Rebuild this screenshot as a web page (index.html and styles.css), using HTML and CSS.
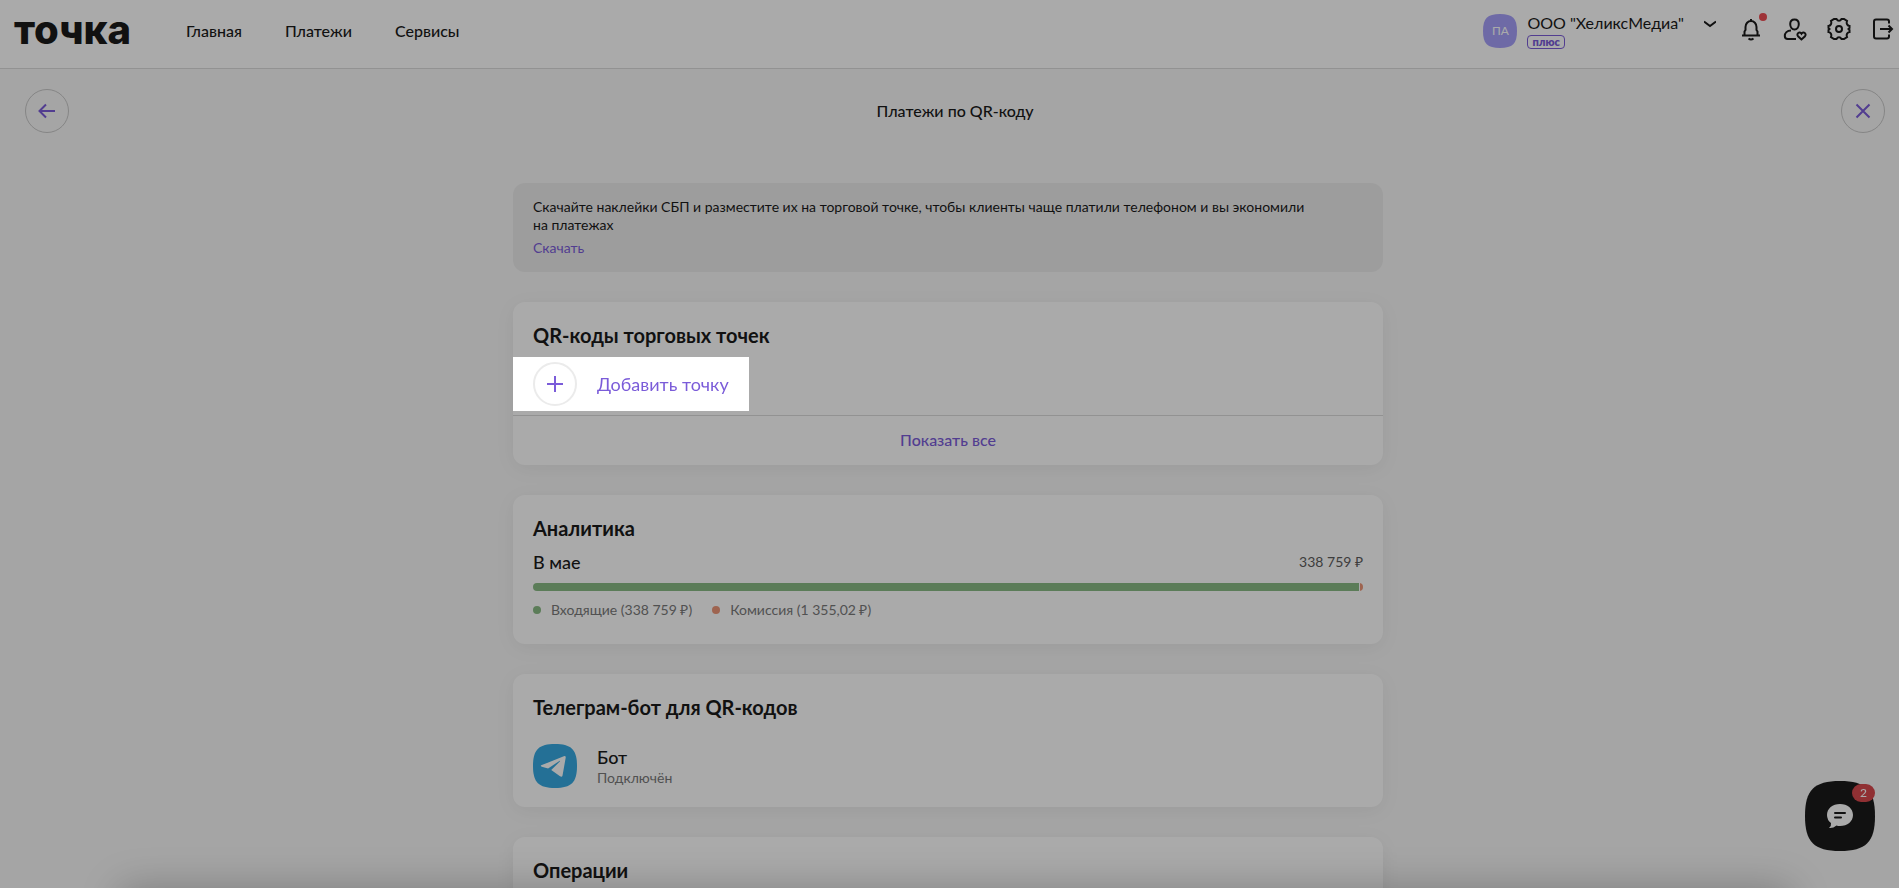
FILE: index.html
```
<!DOCTYPE html>
<html lang="ru">

<head>
  <meta charset="UTF-8">
  <meta name="viewport" content="width=device-width, initial-scale=1.0">
  <title>Платежи по QR-коду</title>
  <link rel="stylesheet" href="styles.css">
</head>

<body>

  <header class="header">
    <a href="#" class="logo">точка</a>
    <nav class="nav">
      <a href="#">Главная</a>
      <a href="#">Платежи</a>
      <a href="#">Сервисы</a>
    </nav>

    <button class="account">
      <span class="avatar">
        <svg class="squircle" viewBox="0 0 70 70"><path d="M35 0C61 0 70 9 70 35S61 70 35 70 0 61 0 35 9 0 35 0Z"/></svg>
        <span class="avatar-text">ПА</span>
      </span>
      <span class="company">
        <span class="company-name">ООО "ХеликсМедиа"</span>
        <span class="plan">плюс</span>
      </span>
      <svg class="chevron" width="12" height="12" viewBox="0 0 12 12"><path d="M0 3.500l6 4.500 6-4.500"/></svg>
    </button>

    <div class="tools">
      <button class="tool" aria-label="Уведомления">
        <svg width="24" height="24" viewBox="0 0 24 24"><path d="M3 18.500h18M5.500 18v-3.500l1-1.500v-3a5.500 6 0 0 1 11 0v3l1 1.500V18M12 4.500V2M9.500 21.500q2.500 2 5 0"/></svg>
        <span class="dot"></span>
      </button>
      <button class="tool" aria-label="Профиль">
        <svg width="24" height="24" viewBox="0 0 24 24"><path d="M11.500 2.500c2.600 0 4.300 1.900 4.300 4.600s-1.700 5.400-4.300 5.400-4.300-2.700-4.300-5.400 1.700-4.600 4.300-4.600zM8 13.500c-4 0-6.200 2.500-6.200 5.500 0 2 1 3 3 3h8.200M18.500 22.500l-3.500-3.300c-2-2.400 1.500-5.200 3.500-2.500 2-2.700 5.500.1 3.500 2.500z"/></svg>
      </button>
      <button class="tool" aria-label="Настройки">
        <svg width="24" height="24" viewBox="0 0 24 24"><circle cx="12" cy="12" r="3"/><path d="M7 2h2.500q1 1.800 2.500 1.800T14.500 2H17l3 2q-.8 2 .1 3.400T22.500 9v2l-1 1 1 1v2q-1.500.2-2.400 1.600T20 20l-3 2h-2.500q-1-1.800-2.500-1.800T9.500 22H7l-3-2q.8-2-.1-3.400T1.500 15v-2l1-1-1-1V9q1.500-.2 2.400-1.600T4 4z"/></svg>
      </button>
      <button class="tool" aria-label="Выйти">
        <svg width="24" height="24" viewBox="0 0 24 24"><path d="M18 6.500V4.500q0-2-2-2H5q-2 0-2 2v15q0 2 2 2h11q2 0 2-2v-2M9 12h11.500M17.500 8.500L21 12l-3.500 3.500"/></svg>
      </button>
    </div>
  </header>

  <div class="title-bar">
    <button class="round-button" aria-label="Назад">
      <svg width="18" height="16" viewBox="0 0 18 16"><path d="M17 8H2M8 1.500L1.500 8 8 14.500"/></svg>
    </button>
    <h1>Платежи по QR-коду</h1>
    <button class="round-button" aria-label="Закрыть">
      <svg width="16" height="16" viewBox="0 0 16 16"><path d="M1.500 1.500l13 13M14.500 1.500l-13 13"/></svg>
    </button>
  </div>

  <main class="content">
    <section class="banner">
      <p>Скачайте наклейки СБП и разместите их на торговой точке, чтобы клиенты чаще платили телефоном и вы экономили<br>на платежах</p>
      <a href="#">Скачать</a>
    </section>

    <section class="card">
      <h2>QR-коды торговых точек</h2>
      <button class="add-button">
        <span class="add-icon">
          <svg width="16" height="16" viewBox="0 0 16 16"><path d="M8 0v16M0 8h16"/></svg>
        </span>
        Добавить точку
      </button>
      <a href="#" class="show-all">Показать все</a>
    </section>

    <section class="card analytics">
      <h2>Аналитика</h2>
      <div class="month">
        <h3>В мае</h3>
        <span class="total">338 759 ₽</span>
      </div>
      <div class="bar">
        <div class="bar-income"></div>
        <div class="bar-fee"></div>
      </div>
      <ul class="legend">
        <li class="income">Входящие (338 759 ₽)</li>
        <li class="fee">Комиссия (1 355,02 ₽)</li>
      </ul>
    </section>

    <section class="card telegram">
      <h2>Телеграм-бот для QR-кодов</h2>
      <div class="bot">
        <svg class="bot-icon" width="44" height="44" viewBox="0 0 70 70">
          <path fill="#36a9e1" d="M35 0C61 0 70 9 70 35S61 70 35 70 0 61 0 35 9 0 35 0Z"/>
          <path fill="#fff" d="M13 34L49 19.500q3.500-1 3 2.500L47 50q-.8 3.500-4 1.500L29 41.500 43 27.500q.5-1-1-.5L24 39l-10-3q-2.500-1-1-2z"/>
        </svg>
        <div>
          <h3>Бот</h3>
          <p>Подключён</p>
        </div>
      </div>
    </section>

    <section class="card operations">
      <h2>Операции</h2>
    </section>
  </main>

  <div class="bottom-sheet"></div>

  <button class="chat" aria-label="Чат">
    <svg class="squircle" viewBox="0 0 70 70"><path d="M35 0C61 0 70 9 70 35S61 70 35 70 0 61 0 35 9 0 35 0Z"/></svg>
    <svg class="bubble" width="26" height="26" viewBox="0 0 26 26">
      <path fill="#fff" d="M13 1c7.500 0 13 4.500 13 11s-5.500 11-13 11q-2 0-3.500-.5Q6 25.500 2 25q2.500-2 2-5Q0 17 0 12C0 5.500 5.500 1 13 1z"/>
      <path stroke="#1a1a1a" stroke-width="2" stroke-linecap="round" d="M8 10h10M8 14.500h6"/>
    </svg>
    <span class="chat-count">2</span>
  </button>

</body>

</html>
```
FILE: styles.css
```
* {
  box-sizing: border-box;
}

body {
  margin: 0;
  height: 100vh;
  overflow: hidden;
  background-color: #f8f8f8;
  color: #1a1a1a;
  font-family: Lato, "Liberation Sans", sans-serif;
  font-size: 14px;
  line-height: 18px;
}

h1,
h2,
h3,
p,
ul {
  margin: 0;
  padding: 0;
}

a {
  color: #7b5cd9;
  text-decoration: none;
}

button {
  padding: 0;
  border: none;
  background: none;
  color: inherit;
  font: inherit;
  cursor: pointer;
}

svg {
  display: block;
  fill: none;
}

h1 {
  font-size: 16px;
  font-weight: 500;
}

h2 {
  font-size: 20px;
  line-height: 24px;
  font-weight: 700;
}

h3 {
  font-size: 18px;
  line-height: 24px;
  font-weight: 500;
}

/* Header */

.header {
  display: flex;
  align-items: flex-start;
  height: 69px;
  padding: 0 4px 0 14px;
  background-color: white;
  border-bottom: 1px solid #dcdcdc;
}

.logo {
  width: 172px;
  padding-top: 8px;
  color: #1a1a1a;
  font-family: Inter, sans-serif;
  font-size: 40px;
  line-height: 44px;
  font-weight: 800;
}

.nav {
  display: flex;
  gap: 43px;
  padding-top: 22px;
  font-size: 16px;
  font-weight: 500;
}

.nav a {
  color: #1a1a1a;
}

.account {
  display: flex;
  align-items: flex-start;
  margin-left: auto;
  padding-top: 14px;
  text-align: left;
}

.avatar {
  display: grid;
  place-items: center;
  width: 34px;
  height: 34px;
  margin-right: 10px;
  color: white;
  font-size: 12px;
}

.squircle,
.avatar-text {
  grid-area: 1 / 1;
}

.squircle {
  width: 100%;
  height: 100%;
}

.avatar .squircle {
  fill: #a69ff9;
}

.company {
  display: flex;
  flex-direction: column;
  align-items: flex-start;
  gap: 3px;
}

.company-name {
  font-size: 16px;
}

.plan {
  padding: 0 4px;
  border: 1px solid #7b5cd9;
  border-radius: 4px;
  color: #7b5cd9;
  font-size: 11px;
  line-height: 12px;
  font-weight: 800;
}

.chevron {
  margin: 4px 23px 0 20px;
  stroke: #1a1a1a;
  stroke-width: 2;
}

.tools {
  display: flex;
  gap: 20px;
  padding-top: 17px;
}

.tool {
  position: relative;
}

.tool svg {
  stroke: #1a1a1a;
  stroke-width: 2;
}

.dot {
  position: absolute;
  top: -4px;
  right: -4px;
  width: 8px;
  height: 8px;
  border-radius: 50%;
  background-color: #ee4d54;
}

/* Title */

.title-bar {
  display: flex;
  justify-content: space-between;
  align-items: center;
  padding: 20px 14px 50px 25px;
}

.round-button,
.add-icon {
  display: flex;
  justify-content: center;
  align-items: center;
  width: 44px;
  height: 44px;
  border: 1px solid #c8c8c8;
  border-radius: 50%;
}

.round-button svg,
.add-icon svg {
  stroke: #7b5cd9;
  stroke-width: 2;
}

/* Content */

.content {
  display: flex;
  flex-direction: column;
  gap: 30px;
  max-width: 873px;
  margin: 0 auto;
  padding-right: 3px;
}

.banner {
  padding: 15px 20px;
  border-radius: 12px;
  background-color: #ececec;
}

.banner a {
  display: inline-block;
  margin-top: 5px;
  vertical-align: top;
}

.card {
  padding: 21px 20px 0;
  border-radius: 12px;
  background-color: white;
  box-shadow: 0 4px 20px rgba(0, 0, 0, 0.06);
}

/* The spread shadow dims everything around the button */
.add-button {
  position: relative;
  z-index: 10;
  display: flex;
  align-items: center;
  gap: 20px;
  margin: 10px -20px 4px;
  padding: 5px 20px;
  background-color: white;
  box-shadow: 0 0 0 3000px rgba(0, 0, 0, 0.335);
  color: #7b5cd9;
  font-size: 18px;
}

.add-icon {
  border: 2px solid #ebebeb;
}

.show-all {
  display: block;
  margin: 0 -20px;
  padding: 15px 0 16px;
  border-top: 1px solid #dcdcdc;
  font-size: 16px;
  font-weight: 500;
  text-align: center;
}

.analytics {
  padding-bottom: 25px;
}

.month {
  display: flex;
  justify-content: space-between;
  align-items: center;
  margin: 10px 0 9px;
}

.total {
  color: #5c5c5c;
}

.bar {
  display: flex;
  gap: 1px;
  height: 8px;
  overflow: hidden;
  border-radius: 4px;
}

.bar-income {
  flex: 1;
  background-color: #89bb84;
}

.bar-fee {
  width: 3px;
  background-color: #ee9678;
}

.legend {
  display: flex;
  gap: 20px;
  margin-top: 10px;
  color: #7a7a7a;
  list-style: none;
}

.legend li {
  display: flex;
  align-items: center;
  gap: 10px;
}

.legend li::before {
  content: "";
  width: 8px;
  height: 8px;
  border-radius: 50%;
}

.income::before {
  background-color: #89bb84;
}

.fee::before {
  background-color: #ee9678;
}

.telegram {
  padding-bottom: 19px;
}

.bot {
  display: flex;
  align-items: center;
  gap: 20px;
  margin-top: 25px;
}

.bot p {
  color: #7a7a7a;
}

.operations {
  padding-bottom: 40px;
}

.bottom-sheet {
  position: fixed;
  left: 120px;
  right: 108px;
  bottom: -100px;
  height: 100px;
  box-shadow: 0 0 40px rgba(0, 0, 0, 0.24);
}

.chat {
  position: fixed;
  right: 24px;
  bottom: 37px;
  display: grid;
  place-items: center;
  width: 70px;
  height: 70px;
}

.chat .squircle {
  fill: #1a1a1a;
}

.bubble {
  grid-area: 1 / 1;
}

.chat-count {
  position: absolute;
  top: 3px;
  right: 0;
  width: 23px;
  border-radius: 9px;
  background-color: #d9484d;
  color: white;
  font-size: 12px;
  font-weight: 500;
}
```
